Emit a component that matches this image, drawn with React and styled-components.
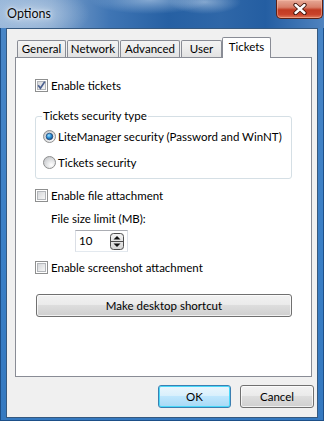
import React from "react";
import styled, { createGlobalStyle } from "styled-components";

const GlobalStyle = createGlobalStyle`
  html, body {
    margin: 0;
    padding: 0;
    background: #fff;
  }
  body {
    font-family: "Segoe UI", Lato, "Noto Sans", sans-serif;
    font-size: 11.5px;
    color: #000;
  }
`;

const Window = styled.div`
  width: 324px;
  height: 421px;
  box-sizing: border-box;
  display: flex;
  flex-direction: column;
  padding: 0 7px 4px 7px;
  overflow: hidden;
  background: linear-gradient(180deg, #4a86c6 0%, #3a7fc6 60%, #3579c0 100%);
  box-shadow: inset 1px 0 0 #1d4f88, inset -1px 0 0 #1d4f88, inset 0 -1px 0 #1d4f88;
`;

const TitleBar = styled.div`
  height: 28px;
  margin: 0 -7px 1px -7px;
  padding-left: 7px;
  display: flex;
  justify-content: space-between;
  align-items: flex-start;
  background:
    radial-gradient(ellipse 60px 14px at 150px 0px, rgba(190, 212, 236, 0.6), transparent),
    radial-gradient(ellipse 36px 12px at 205px 2px, rgba(200, 218, 238, 0.55), transparent),
    radial-gradient(ellipse 55px 26px at 35px 14px, rgba(214, 228, 242, 0.55), transparent),
    linear-gradient(90deg, #93b3d7 0%, #7ea2cc 16%, #3f75b4 34%, #2660a3 52%, #2f67a8 68%, #245ea2 82%, #4f83bf 100%);
`;

const Caption = styled.div`
  margin-top: 6px;
  font-size: 12.5px;
  line-height: 16px;
  color: #0b0b0b;
  text-shadow: 0 0 6px rgba(255, 255, 255, 0.9), 0 0 3px rgba(255, 255, 255, 0.8);
`;

const CloseButton = styled.div`
  width: 47px;
  height: 19px;
  margin-right: 1px;
  box-sizing: border-box;
  display: flex;
  align-items: center;
  justify-content: center;
  border: 1px solid #5c2115;
  border-top: none;
  border-radius: 0 0 5px 5px;
  background: linear-gradient(180deg, #e6a896 0%, #d8806a 40%, #c13b22 55%, #c8422a 80%, #e07b5c 100%);
  box-shadow: inset 0 0 0 1px rgba(255, 200, 180, 0.45);
`;

const Client = styled.div`
  flex: 1;
  display: flex;
  flex-direction: column;
  padding: 8px 3px 0 8px;
  background: #f0f0f0;
  box-shadow: 0 0 0 1px #36597f;
`;

const TabStrip = styled.div`
  display: flex;
  align-items: flex-end;
  height: 21px;
  padding-left: 2px;
  margin-bottom: -1px;
  position: relative;
  z-index: 1;
`;

const Tab = styled.div`
  box-sizing: border-box;
  width: ${({ $w }) => $w}px;
  height: ${({ $active }) => ($active ? 21 : 17)}px;
  margin-left: ${({ $overlap }) => ($overlap ? -1 : 0)}px;
  margin-right: 1px;
  margin-bottom: ${({ $active }) => ($active ? 0 : 1)}px;
  display: flex;
  align-items: center;
  justify-content: center;
  padding-bottom: ${({ $active }) => ($active ? 2 : 0)}px;
  border: 1px solid #898c95;
  border-bottom: none;
  border-radius: 2px 2px 0 0;
  background: ${({ $active }) =>
    $active ? "#fff" : "linear-gradient(180deg, #f3f3f3 0%, #ececec 50%, #e2e2e2 100%)"};
  line-height: 14px;
  white-space: nowrap;
`;

const Panel = styled.div`
  width: 297px;
  height: 320px;
  box-sizing: border-box;
  border: 1px solid #898c95;
  background: #fff;
  padding: 21px 0 0 19px;
  display: flex;
  flex-direction: column;
  align-items: flex-start;
`;

const CheckRow = styled.label`
  display: flex;
  align-items: center;
  gap: 3px;
  height: 13px;
  line-height: 14px;
  margin-top: ${({ $mt }) => $mt || 0}px;
  white-space: nowrap;
`;

const Group = styled.fieldset`
  margin: 17px 0 0 0;
  width: 257px;
  box-sizing: border-box;
  padding: 7px 0 9px 7px;
  border: 1px solid #d5dfe5;
  border-radius: 3px;
  display: flex;
  flex-direction: column;
  gap: 13px;
`;

const Legend = styled.legend`
  margin-left: -1px;
  padding: 0 1px;
  line-height: 14px;
`;

const RadioRow = styled.label`
  display: flex;
  align-items: center;
  gap: 2px;
  height: 13px;
  line-height: 14px;
  white-space: nowrap;
`;

const FieldLabel = styled.div`
  margin: 10px 0 0 16px;
  line-height: 14px;
`;

const SpinEdit = styled.div`
  margin: 4px 0 0 40px;
  width: 53px;
  height: 22px;
  box-sizing: border-box;
  display: flex;
  align-items: center;
  justify-content: space-between;
  padding: 0 3px 0 3px;
  border: 1px solid #dbdfe6;
  border-top-color: #abadb3;
  border-bottom-color: #e3e9ef;
  background: #fff;
`;

const SpinValue = styled.span`
  line-height: 14px;
`;

const PanelButton = styled.div`
  margin: 20px 0 0 1px;
  width: 256px;
  height: 23px;
  box-sizing: border-box;
  display: flex;
  align-items: center;
  justify-content: center;
  border: 1px solid #707070;
  border-radius: 3px;
  background: linear-gradient(180deg, #f2f2f2 0%, #ebebeb 45%, #dddddd 50%, #cfcfcf 100%);
  box-shadow: inset 0 0 0 1px rgba(255, 255, 255, 0.7);
  line-height: 14px;
`;

const Footer = styled.div`
  display: flex;
  justify-content: flex-end;
  gap: 9px;
  margin-top: 8px;
`;

const DialogButton = styled.div`
  width: ${({ $w }) => $w}px;
  height: 23px;
  box-sizing: border-box;
  display: flex;
  align-items: center;
  justify-content: center;
  border: 1px solid ${({ $default }) => ($default ? "#3c7fb1" : "#707070")};
  border-radius: 3px;
  background: ${({ $default }) =>
    $default
      ? "linear-gradient(180deg, #eaf6fd 0%, #d9f0fc 45%, #bee6fd 50%, #a7d9f5 100%)"
      : "linear-gradient(180deg, #f2f2f2 0%, #ebebeb 45%, #dddddd 50%, #cfcfcf 100%)"};
  box-shadow: ${({ $default }) =>
    $default ? "inset 0 0 0 1px #48d8f9" : "inset 0 0 0 1px rgba(255, 255, 255, 0.7)"};
  line-height: 14px;
`;

const CheckBox = ({ checked }) => (
  <svg width="13" height="13" viewBox="0 0 13 13">
    <defs>
      <linearGradient id="cbFill" x1="0" y1="0" x2="1" y2="1">
        <stop offset="0" stopColor="#d3d5d8" />
        <stop offset="1" stopColor="#f8f8f8" />
      </linearGradient>
    </defs>
    <rect x="0.5" y="0.5" width="12" height="12" fill="#fff" stroke="#8e8f8f" />
    <rect x="2.5" y="2.5" width="8" height="8" fill="url(#cbFill)" stroke="#b3b6ba" />
    {checked && (
      <path d="M3.2 6.3 L5.4 9.2 L9.8 2.6" stroke="#4a5f8e" strokeWidth="1.7" fill="none" />
    )}
  </svg>
);

const Radio = ({ checked }) => (
  <svg width="13" height="13" viewBox="0 0 13 13">
    <defs>
      <radialGradient id="rFill" cx="0.65" cy="0.7" r="0.7">
        <stop offset="0" stopColor="#ffffff" />
        <stop offset="1" stopColor="#c9cbce" />
      </radialGradient>
      <radialGradient id="rDot" cx="0.4" cy="0.35" r="0.7">
        <stop offset="0" stopColor="#9fe0ff" />
        <stop offset="0.5" stopColor="#2a8fd6" />
        <stop offset="1" stopColor="#15457e" />
      </radialGradient>
    </defs>
    <circle cx="6.5" cy="6.5" r="6" fill="url(#rFill)" stroke="#8e8f8f" />
    {checked && <circle cx="6.5" cy="6.5" r="3.3" fill="url(#rDot)" stroke="#1a3f6e" strokeWidth="0.7" />}
  </svg>
);

const SpinArrows = () => (
  <svg width="14" height="17" viewBox="0 0 14 17">
    <defs>
      <linearGradient id="spFill" x1="0" y1="0" x2="0" y2="1">
        <stop offset="0" stopColor="#f4f4f4" />
        <stop offset="1" stopColor="#d6d6d6" />
      </linearGradient>
    </defs>
    <rect x="0.5" y="0.5" width="13" height="16" rx="3" fill="url(#spFill)" stroke="#4e4e4e" />
    <line x1="1" y1="8.5" x2="13" y2="8.5" stroke="#4e4e4e" />
    <path d="M3.5 6.5 L7 3 L10.5 6.5 Z" fill="#111" />
    <path d="M3.5 10.5 L7 14 L10.5 10.5 Z" fill="#111" />
  </svg>
);

const CloseGlyph = () => (
  <svg width="14" height="12" viewBox="0 0 14 12">
    <path d="M2.5 2 L11.5 10 M11.5 2 L2.5 10" stroke="#3b1109" strokeWidth="4.2" strokeLinecap="round" />
    <path d="M2.5 2 L11.5 10 M11.5 2 L2.5 10" stroke="#fff" strokeWidth="2.4" strokeLinecap="round" />
  </svg>
);

const tabs = [
  { label: "General", w: 49 },
  { label: "Network", w: 52 },
  { label: "Advanced", w: 60 },
  { label: "User", w: 41 },
  { label: "Tickets", w: 49, active: true },
];

export default function App() {
  return (
    <>
      <GlobalStyle />
      <Window>
        <TitleBar>
          <Caption>Options</Caption>
          <CloseButton>
            <CloseGlyph />
          </CloseButton>
        </TitleBar>
        <Client>
          <TabStrip>
            {tabs.map((t) => (
              <Tab key={t.label} $w={t.w} $active={t.active} $overlap={t.active}>
                {t.label}
              </Tab>
            ))}
          </TabStrip>
          <Panel>
            <CheckRow>
              <CheckBox checked />
              Enable tickets
            </CheckRow>
            <Group>
              <Legend>Tickets security type</Legend>
              <RadioRow>
                <Radio checked />
                LiteManager security (Password and WinNT)
              </RadioRow>
              <RadioRow>
                <Radio />
                Tickets security
              </RadioRow>
            </Group>
            <CheckRow $mt={10}>
              <CheckBox />
              Enable file attachment
            </CheckRow>
            <FieldLabel>File size limit (MB):</FieldLabel>
            <SpinEdit>
              <SpinValue>10</SpinValue>
              <SpinArrows />
            </SpinEdit>
            <CheckRow $mt={9}>
              <CheckBox />
              Enable screenshot attachment
            </CheckRow>
            <PanelButton>Make desktop shortcut</PanelButton>
          </Panel>
          <Footer>
            <DialogButton $w={73} $default>
              OK
            </DialogButton>
            <DialogButton $w={74}>Cancel</DialogButton>
          </Footer>
        </Client>
      </Window>
    </>
  );
}
